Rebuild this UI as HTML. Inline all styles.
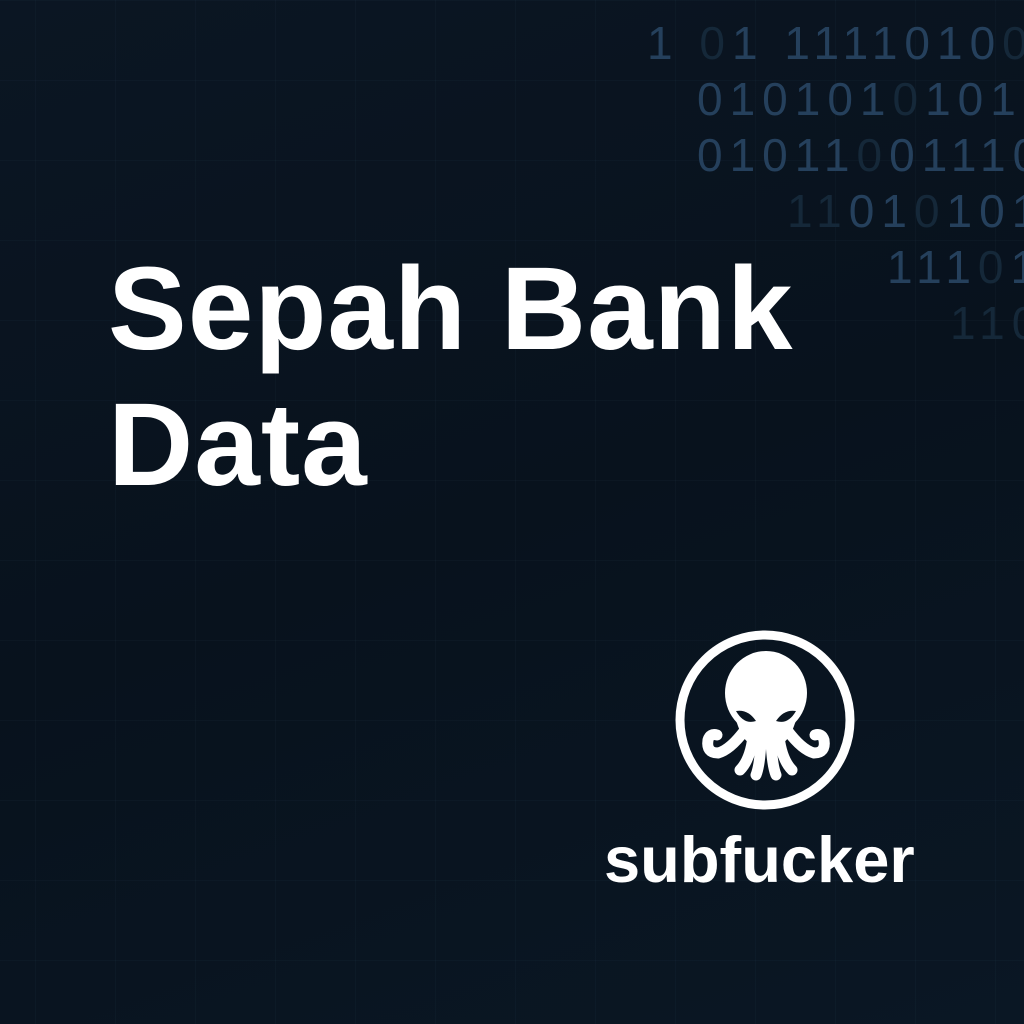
<!DOCTYPE html>
<html><head><style>
html,body{margin:0;padding:0}
body{width:1024px;height:1024px;overflow:hidden;position:relative;
background:linear-gradient(160deg,#0b1623 0%,#08121d 50%,#0a1724 100%);
font-family:"Liberation Sans",sans-serif}
.grid{position:absolute;inset:0;
background-image:linear-gradient(to right,rgba(70,100,130,0.06) 1px,transparent 1px),linear-gradient(to bottom,rgba(70,100,130,0.06) 1px,transparent 1px);
background-size:80px 80px;background-position:35px 0}
.wrap{position:absolute;left:0;top:0;width:1024px;height:400px;overflow:hidden}
.b{position:absolute;font-size:46px;letter-spacing:7px;color:#25405c;white-space:pre;line-height:1}
.b i{font-style:normal;color:#152839}
.t{position:absolute;left:108px;color:#fff;font-weight:bold;font-size:118px;line-height:1;letter-spacing:1px}
.s{position:absolute;left:604px;top:822px;color:#fff;font-weight:bold;font-size:65px;letter-spacing:0px}
</style></head><body>
<div class="grid"></div>
<div class="wrap">
<div class="b" style="left:647px;top:20px">1 <i>0</i>1 1111010<i>0</i>0</div>
<div class="b" style="left:697px;top:76px">010101<i>0</i>1010</div>
<div class="b" style="left:697px;top:132px">01011<i>0</i>01110</div>
<div class="b" style="left:787px;top:188px"><i>11</i>01<i>0</i>101</div>
<div class="b" style="left:887px;top:244px">111<i>0</i>1</div>
<div class="b" style="left:950px;top:300px"><i>110</i></div>
</div>
<div class="t" style="top:250px">Sepah Bank</div>
<div class="t" style="top:386px">Data</div>
<svg style="position:absolute;left:670px;top:625px" width="190" height="190" viewBox="0 0 190 190">
<circle cx="95" cy="95" r="85" fill="none" stroke="#fff" stroke-width="9"/>
<g fill="#fff">
<ellipse cx="96" cy="68" rx="41" ry="42"/>
<path d="M62 80 Q70 115 80 118 L112 118 Q122 115 130 80 Z"/>
</g>
<g fill="none" stroke="#fff" stroke-width="11" stroke-linecap="round">
<path d="M75 105 Q60 125 48 128 Q36 128 38 115 Q40 108 47 110"/>
<path d="M117 105 Q132 125 144 128 Q156 128 154 115 Q152 108 145 110"/>
<path d="M83 112 Q80 135 70 145"/>
<path d="M109 112 Q112 135 122 145"/>
<path d="M91 115 Q90 140 86 150"/>
<path d="M101 115 Q102 140 106 150"/>
</g>
<g fill="#0a1520">
<path d="M66 86 Q78 84 86 96 Q74 100 66 86 Z"/>
<path d="M126 86 Q114 84 106 96 Q118 100 126 86 Z"/>
</g>
</svg>
<div class="s">subfucker</div>
</body></html>
